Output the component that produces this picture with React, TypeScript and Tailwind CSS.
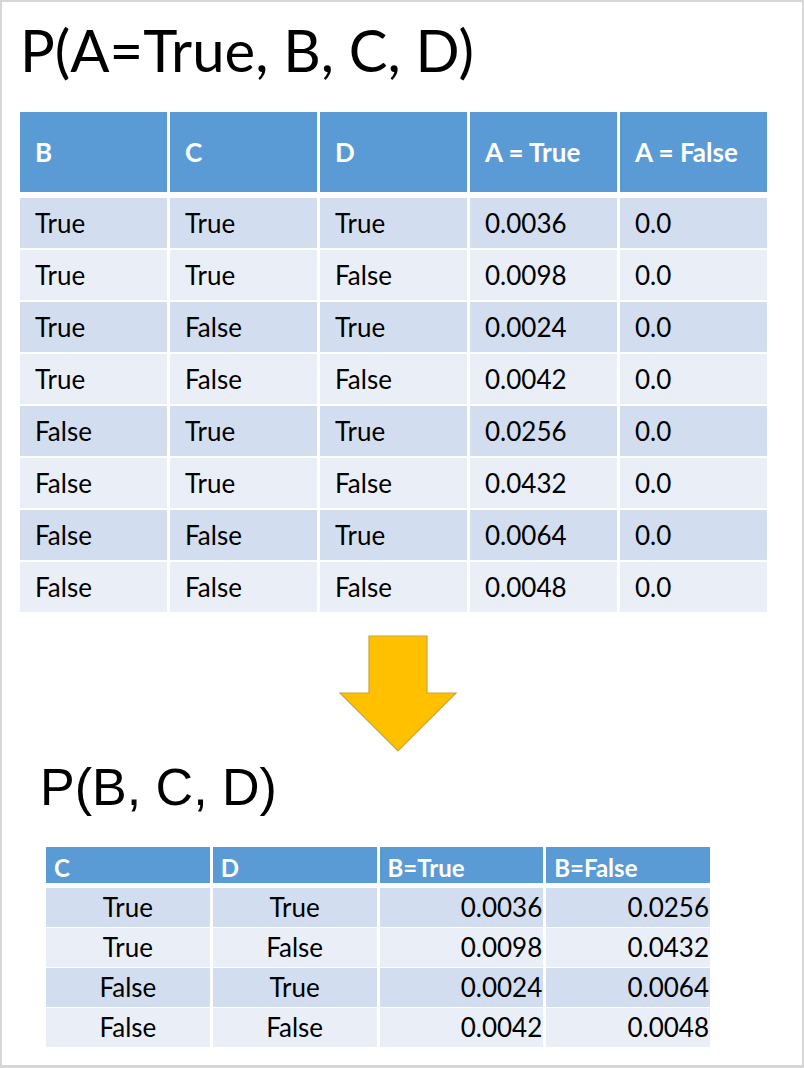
import React from "react";

const topRows = [
  ["True", "True", "True", "0.0036", "0.0"],
  ["True", "True", "False", "0.0098", "0.0"],
  ["True", "False", "True", "0.0024", "0.0"],
  ["True", "False", "False", "0.0042", "0.0"],
  ["False", "True", "True", "0.0256", "0.0"],
  ["False", "True", "False", "0.0432", "0.0"],
  ["False", "False", "True", "0.0064", "0.0"],
  ["False", "False", "False", "0.0048", "0.0"],
];

const bottomRows = [
  ["True", "True", "0.0036", "0.0256"],
  ["True", "False", "0.0098", "0.0432"],
  ["False", "True", "0.0024", "0.0064"],
  ["False", "False", "0.0042", "0.0048"],
];

const DownArrow = () => (
  <svg width="120" height="118" viewBox="0 0 120 118">
    <polygon
      points="31,1 89,1 89,58 118,58 60,116 2,58 31,58"
      fill="#FFC000"
      stroke="#C9A63A"
      strokeWidth={1.2}
    />
  </svg>
);

export default function App() {
  return (
    <div className="w-[804px] h-[1068px] bg-white border-2 border-b-[3px] border-[#d6d6d6] font-['Lato',sans-serif] text-black">
      {/* Joint distribution */}
      <h1 className="pl-[18px] pt-[11px] h-[110px] text-[58px] leading-[74px] font-normal">
        P(A=True, B, C, D)
      </h1>

      <div className="ml-[18px] w-[747px]">
        <div className="grid grid-cols-5 gap-x-[3px] h-[80px] bg-white">
          {["B", "C", "D", "A = True", "A = False"].map((h) => (
            <div key={h} className="bg-[#5B9BD5] text-white font-bold text-[26px] flex items-center pl-[15px]">
              {h}
            </div>
          ))}
        </div>
        <div className="mt-[6px] flex flex-col gap-y-[2px]">
          {topRows.map((row, i) => (
            <div key={i} className="grid grid-cols-5 gap-x-[3px] h-[50px]">
              {row.map((cell, j) => (
                <div
                  key={j}
                  className={`${i % 2 === 0 ? "bg-[#D2DEEF]" : "bg-[#EAEFF7]"} text-[26px] flex items-center pl-[15px]`}
                >
                  {cell}
                </div>
              ))}
            </div>
          ))}
        </div>
      </div>

      <div className="mt-[23px] pl-[336px]">
        <DownArrow />
      </div>

      {/* Marginal */}
      <h2 className="pl-[38px] mt-[4px] h-[90px] font-['Liberation_Sans',Arial,sans-serif] text-[52px] leading-[60px] font-normal">
        P(B, C, D)
      </h2>

      <div className="ml-[44px] w-[664px]">
        <div className="grid grid-cols-4 gap-x-[3px] h-[36px]">
          {["C", "D", "B=True", "B=False"].map((h) => (
            <div key={h} className="bg-[#5B9BD5] text-white font-bold text-[24px] flex items-end leading-[30px] pl-[8px]">
              {h}
            </div>
          ))}
        </div>
        <div className="mt-[5px] flex flex-col gap-y-[2px]">
          {bottomRows.map((row, i) => (
            <div key={i} className="grid grid-cols-4 gap-x-[3px] h-[38px]">
              {row.map((cell, j) => (
                <div
                  key={j}
                  className={`${i % 2 === 0 ? "bg-[#D2DEEF]" : "bg-[#EAEFF7]"} text-[26px] flex items-center ${j < 2 ? "justify-center" : "justify-end pr-[1px]"}`}
                >
                  {cell}
                </div>
              ))}
            </div>
          ))}
        </div>
      </div>
    </div>
  );
}
